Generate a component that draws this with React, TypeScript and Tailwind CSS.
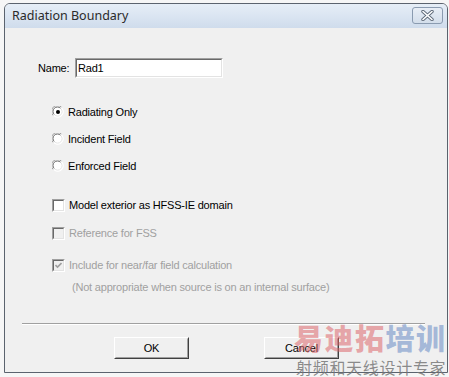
import React from "react";

function Radio({ checked }: { checked?: boolean }) {
  return (
    <svg width="12" height="12" viewBox="0 0 12 12" className="shrink-0">
      <circle cx="6" cy="6" r="5.5" fill="#ffffff" />
      <path d="M1.2 9.5 A5.5 5.5 0 0 1 9.5 1.2" fill="none" stroke="#a0a0a0" strokeWidth="1" />
      <path d="M2.3 8.6 A4.3 4.3 0 0 1 8.6 2.3" fill="none" stroke="#696969" strokeWidth="1" />
      <path d="M9.5 1.6 A5.5 5.5 0 0 1 1.6 9.5" fill="none" stroke="#ffffff" strokeWidth="1" />
      <path d="M8.8 2.5 A4.3 4.3 0 0 1 2.5 8.8" fill="none" stroke="#e3e3e3" strokeWidth="1" />
      {checked && <circle cx="6" cy="6" r="2" fill="#000000" />}
    </svg>
  );
}

function Check({ checked, disabled }: { checked?: boolean; disabled?: boolean }) {
  return (
    <div className="w-[13px] h-[13px] shrink-0 border border-t-[#a0a0a0] border-l-[#a0a0a0] border-b-white border-r-white">
      <div
        className={`w-full h-full border border-t-[#696969] border-l-[#696969] border-b-[#e3e3e3] border-r-[#e3e3e3] ${
          disabled ? "bg-[#f0f0f0]" : "bg-white"
        } flex items-center justify-center`}
      >
        {checked && (
          <svg width="7" height="7" viewBox="0 0 7 7">
            <path d="M0.5 3 L2.5 5 L6.5 1" fill="none" stroke={disabled ? "#a0a0a0" : "#000"} strokeWidth="1.6" />
          </svg>
        )}
      </div>
    </div>
  );
}

function Button({ label }: { label: string }) {
  return (
    <div className="w-[75px] h-[22px] border border-t-white border-l-white border-b-[#404040] border-r-[#404040] bg-[#f0f0f0]">
      <div className="w-full h-full border border-t-[#f0f0f0] border-l-[#f0f0f0] border-b-[#a0a0a0] border-r-[#a0a0a0] flex items-center justify-center text-[11px] text-black">
        {label}
      </div>
    </div>
  );
}

export default function App() {
  return (
    <div className="w-[449px] h-[377px] bg-[#f6f6f6] relative overflow-hidden font-['Liberation_Sans',Arial,sans-serif] tracking-[-0.2px]">
      <div className="pt-[3px] pl-[4px]">
        <div className="w-[444px] h-[370px] border border-[#5b636e] rounded-t-[6px] flex flex-col overflow-hidden bg-[#f0f0f0]">
          {/* Title bar */}
          <div className="h-[24px] shrink-0 flex items-start justify-between bg-gradient-to-b from-[#e6eef7] to-[#cfdcec]">
            <span className="pl-[7px] pt-[4px] text-[12.5px] leading-[16px] tracking-normal text-[#2a2a2a] font-['Noto_Sans',sans-serif]">
              Radiation Boundary
            </span>
            <div className="mt-[3px] mr-[4px] w-[31px] h-[17px] rounded-[3px] border border-[#8a9bb0] bg-gradient-to-b from-[#e8eef6] to-[#d3deeb] flex items-center justify-center">
              <svg width="13" height="11" viewBox="0 0 13 11">
                <path d="M2 1.5 L11 9.5 M11 1.5 L2 9.5" stroke="#5f6b7a" strokeWidth="3.4" strokeLinecap="round" />
                <path d="M2 1.5 L11 9.5 M11 1.5 L2 9.5" stroke="#ffffff" strokeWidth="1.6" strokeLinecap="round" />
              </svg>
            </div>
          </div>

          {/* Client */}
          <div className="flex-1 flex flex-col text-[11px] text-black">
            {/* Name row */}
            <div className="mt-[30px] ml-[33px] h-[20px] flex items-center">
              <span className="w-[37px]">Name:</span>
              <div className="w-[148px] h-[20px] border border-t-[#a0a0a0] border-l-[#a0a0a0] border-b-white border-r-white">
                <div className="w-full h-full border border-t-[#696969] border-l-[#696969] border-b-[#e3e3e3] border-r-[#e3e3e3] bg-white flex items-center pl-[1px]">
                  Rad1
                </div>
              </div>
            </div>

            {/* Radios */}
            <div className="ml-[47px] flex flex-col">
              <div className="mt-[26px] h-[16px] flex items-center gap-[4px]">
                <Radio checked />
                <span>Radiating Only</span>
              </div>
              <div className="mt-[11px] h-[16px] flex items-center gap-[4px]">
                <Radio />
                <span>Incident Field</span>
              </div>
              <div className="mt-[11px] h-[16px] flex items-center gap-[4px]">
                <Radio />
                <span>Enforced Field</span>
              </div>

              <div className="mt-[23px] h-[16px] flex items-center gap-[4px]">
                <Check />
                <span>Model exterior as HFSS-IE domain</span>
              </div>
              <div className="mt-[12px] h-[16px] flex items-center gap-[4px] text-[#a0a0a0]">
                <Check disabled />
                <span>Reference for FSS</span>
              </div>
              <div className="mt-[16px] h-[16px] flex items-center gap-[4px] text-[#a0a0a0]">
                <Check checked disabled />
                <span>Include for near/far field calculation</span>
              </div>
              <div className="mt-[6px] h-[16px] flex items-center pl-[20px] text-[#a0a0a0]">
                <span>(Not appropriate when source is on an internal surface)</span>
              </div>
            </div>

            {/* Separator */}
            <div className="mt-[28px] ml-[17px] w-[403px] flex flex-col">
              <div className="h-px bg-[#a0a0a0]" />
              <div className="h-px bg-white" />
            </div>

            {/* Buttons */}
            <div className="mt-[12px] ml-[109px] flex gap-[75px]">
              <Button label="OK" />
              <Button label="Cancel" />
            </div>
          </div>
        </div>
      </div>

      {/* Watermark */}
      <div className="absolute left-[294px] top-[322px] flex text-[29px] leading-[30px] font-black tracking-[1.5px] font-['Noto_Sans_CJK_SC',sans-serif]">
        <span className="text-[rgba(220,100,105,0.55)]">易迪拓</span>
        <span className="text-[rgba(100,135,195,0.55)]">培训</span>
      </div>
      <div className="absolute left-[296px] top-[358px] text-[16px] leading-[18px] tracking-[0.7px] text-[rgba(120,120,120,0.85)] font-['Noto_Sans_CJK_SC',sans-serif]">
        射频和天线设计专家
      </div>
    </div>
  );
}
